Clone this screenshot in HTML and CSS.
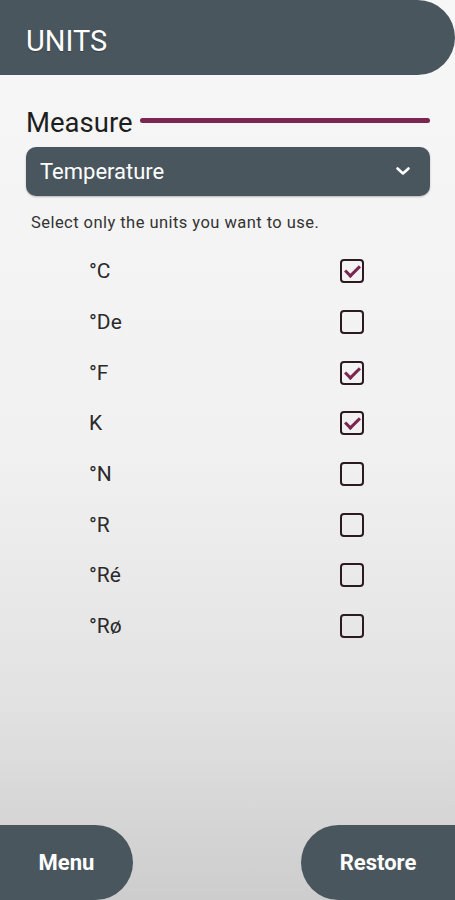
FILE: index.html
```html
<!DOCTYPE html>
<html lang="en">
<head>
    <meta charset="UTF-8">
    <meta name="viewport" content="width=device-width, initial-scale=1.0">
    <title>Units</title>
    <link rel="stylesheet" href="styles.css">
</head>
<body>
    <div class="screen">
        <div class="header">UNITS</div>

        <div class="content">
            <div class="measure-row">
                <span class="measure-label">Measure</span>
                <span class="measure-line"></span>
            </div>

            <div class="dropdown">
                <span>Temperature</span>
                <svg class="chevron" width="18" height="18" viewBox="0 0 18 18">
                    <path d="M3.5 6.5 L9 11.5 L14.5 6.5" fill="none" stroke="#fff" stroke-width="2.6" stroke-linecap="round" stroke-linejoin="round"/>
                </svg>
            </div>

            <p class="hint">Select only the units you want to use.</p>

            <div class="unit-list">
                <div class="unit-row"><span>°C</span><span class="box checked"></span></div>
                <div class="unit-row"><span>°De</span><span class="box"></span></div>
                <div class="unit-row"><span>°F</span><span class="box checked"></span></div>
                <div class="unit-row"><span>K</span><span class="box checked"></span></div>
                <div class="unit-row"><span>°N</span><span class="box"></span></div>
                <div class="unit-row"><span>°R</span><span class="box"></span></div>
                <div class="unit-row"><span>°Ré</span><span class="box"></span></div>
                <div class="unit-row"><span>°Rø</span><span class="box"></span></div>
            </div>
        </div>

        <div class="footer">
            <button class="btn btn-left">Menu</button>
            <button class="btn btn-right">Restore</button>
        </div>
    </div>
</body>
</html>
```

FILE: styles.css
```css
* {
    margin: 0;
    padding: 0;
    box-sizing: border-box;
}

body {
    font-family: Roboto, 'Liberation Sans', sans-serif;
    color: #222;
}

.screen {
    width: 455px;
    height: 900px;
    display: flex;
    flex-direction: column;
    background: linear-gradient(180deg, #f7f7f7 0%, #f1f1f1 50%, #e2e2e2 78%, #cdcdcd 100%);
}

.header {
    height: 75px;
    background: #4a565e;
    border-radius: 0 38px 38px 0;
    color: #fff;
    font-size: 29px;
    padding: 6px 0 0 26px;
    display: flex;
    align-items: center;
    text-shadow: 0 1px 1px rgba(0, 0, 0, 0.3);
}

.content {
    flex: 1;
    padding: 31px 25px 0 26px;
}

.measure-row {
    display: flex;
    align-items: center;
    gap: 7px;
    height: 33px;
}

.measure-label {
    font-size: 27.5px;
    color: #1e1e1e;
}

.measure-line {
    flex: 1;
    height: 5px;
    margin-top: -5px;
    background: #7b2651;
    border-radius: 3px;
}

.dropdown {
    margin-top: 8px;
    height: 49px;
    background: #4a565e;
    border-radius: 10px;
    display: flex;
    align-items: center;
    justify-content: space-between;
    padding: 0 18px 0 14px;
    color: #fff;
    font-size: 22px;
    box-shadow: 0 1px 2px rgba(0, 0, 0, 0.25);
}

.chevron {
    margin-top: -2px;
}

.hint {
    margin-top: 17px;
    padding-left: 5px;
    font-size: 16.5px;
    letter-spacing: 0.45px;
    color: #333;
}

.unit-list {
    margin-top: 14px;
    display: flex;
    flex-direction: column;
}

.unit-row {
    height: 50.7px;
    display: flex;
    align-items: center;
    justify-content: space-between;
    padding: 0 66px 0 63px;
    font-size: 21px;
    color: #2a2a2a;
}

.box {
    width: 24px;
    height: 24px;
    border: 2px solid #2b1a22;
    border-radius: 4px;
    position: relative;
}

.box.checked::after {
    content: "";
    position: absolute;
    left: 6px;
    top: 1px;
    width: 6px;
    height: 12px;
    border-right: 3px solid #7b2651;
    border-bottom: 3px solid #7b2651;
    transform: rotate(45deg);
}

.footer {
    height: 75px;
    display: flex;
    justify-content: space-between;
}

.btn {
    border: none;
    background: #4a565e;
    color: #fff;
    font-family: Roboto, 'Liberation Sans', sans-serif;
    font-size: 22px;
    font-weight: 700;
    height: 75px;
}

.btn-left {
    width: 133px;
    border-radius: 0 38px 38px 0;
}

.btn-right {
    width: 154px;
    border-radius: 38px 0 0 38px;
}
```
